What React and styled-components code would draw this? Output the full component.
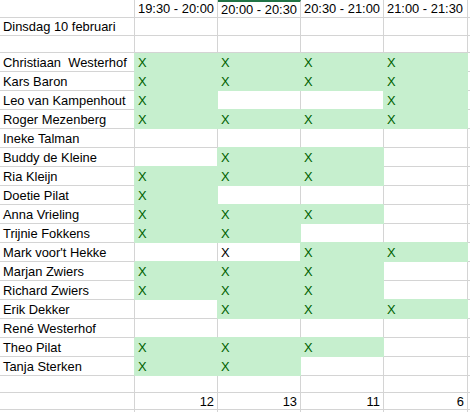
import React from 'react';
import styled, { createGlobalStyle } from 'styled-components';

const GREEN = '#c6efce';
const GRID = '#d4d4d4';

const GlobalStyle = createGlobalStyle`
  body {
    margin: 0;
    background: #ffffff;
    font-family: "Liberation Sans", Arial, sans-serif;
  }
`;

const Sheet = styled.div`
  width: 470px;
  height: 412px;
  overflow: hidden;
  background: #ffffff;
`;

const Row = styled.div`
  display: grid;
  grid-template-columns: 135px 83px 83px 83px 84px 1fr;
  height: ${({ $h }) => $h}px;
`;

const Cell = styled.div`
  box-sizing: border-box;
  height: 100%;
  padding: 0 3px;
  display: flex;
  align-items: center;
  justify-content: ${({ $right }) => ($right ? 'flex-end' : 'flex-start')};
  background: ${({ $fill }) => ($fill ? GREEN : '#ffffff')};
  border-right: 1px solid ${({ $rf }) => ($rf ? GREEN : GRID)};
  border-bottom: 1px solid ${({ $bf }) => ($bf ? GREEN : GRID)};
  border-top: ${({ $active }) => ($active ? '2px solid #217346' : 'none')};
  font-size: 12.9px;
  color: ${({ $mark }) => $mark || '#000000'};
  white-space: pre;
  overflow: hidden;
`;

const slots = ['19:30 - 20:00', '20:00 - 20:30', '20:30 - 21:00', '21:00 - 21:30'];

// g = groene X, b = zwarte X, '' = leeg
const people = [
  ['Christiaan  Westerhof', ['g', 'g', 'g', 'g']],
  ['Kars Baron', ['g', 'g', 'g', 'g']],
  ['Leo van Kampenhout', ['g', '', '', 'g']],
  ['Roger Mezenberg', ['g', 'g', 'g', 'g']],
  ['Ineke Talman', ['', '', '', '']],
  ['Buddy de Kleine', ['', 'g', 'g', '']],
  ['Ria Kleijn', ['g', 'g', 'g', '']],
  ['Doetie Pilat', ['g', '', '', '']],
  ['Anna Vrieling', ['g', 'g', 'g', '']],
  ['Trijnie Fokkens', ['g', 'g', '', '']],
  ["Mark voor't Hekke", ['', 'b', 'g', 'g']],
  ['Marjan Zwiers', ['g', 'g', 'g', '']],
  ['Richard Zwiers', ['g', 'g', 'g', '']],
  ['Erik Dekker', ['', 'g', 'g', 'g']],
  ['René Westerhof', ['', '', '', '']],
  ['Theo Pilat', ['g', 'g', 'g', '']],
  ['Tanja Sterken', ['g', 'g', '', '']],
];

const totals = slots.map((_, i) => people.filter(([, m]) => m[i]).length);

const isGreen = (r, c) => {
  const p = people[r];
  if (!p || c < 0 || c > 3) return false;
  return p[1][c] === 'g';
};

const PlainRow = ({ h, cells = [], right = false }) => (
  <Row $h={h}>
    {[0, 1, 2, 3, 4, 5].map((i) => (
      <Cell key={i} $right={right && i > 0}>
        {cells[i] || ''}
      </Cell>
    ))}
  </Row>
);

const PersonRow = ({ r }) => {
  const [name, marks] = people[r];
  return (
    <Row $h={19}>
      <Cell $rf={isGreen(r, 0)}>{name}</Cell>
      {marks.map((m, c) => {
        const fill = m === 'g';
        return (
          <Cell
            key={c}
            $fill={fill}
            $rf={fill || isGreen(r, c + 1)}
            $bf={fill || isGreen(r + 1, c)}
            $mark={fill ? '#006100' : '#000000'}
          >
            {m ? 'X' : ''}
          </Cell>
        );
      })}
      <Cell />
    </Row>
  );
};

const App = () => (
  <Sheet>
    <GlobalStyle />
    <Row $h={18}>
      <Cell />
      {slots.map((s, i) => (
        <Cell key={s} $active={i === 1}>{s}</Cell>
      ))}
      <Cell />
    </Row>
    <PlainRow h={18} cells={['Dinsdag 10 februari']} />
    <PlainRow h={17} />
    {people.map((_, r) => (
      <PersonRow key={r} r={r} />
    ))}
    <PlainRow h={17} />
    <PlainRow h={17} cells={['', ...totals.map(String)]} right />
    <PlainRow h={17} />
  </Sheet>
);

export default App;
